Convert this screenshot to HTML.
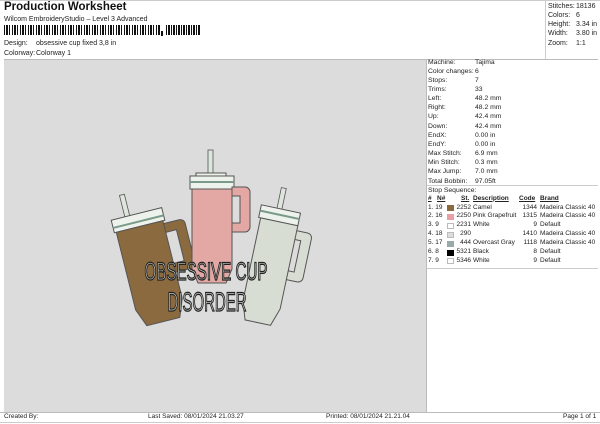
<!DOCTYPE html>
<html><head><style>
*{margin:0;padding:0;box-sizing:border-box}
body{width:600px;height:424px;background:#fff;font-family:"Liberation Sans",sans-serif;color:#222;position:relative;overflow:hidden;font-size:7px}
.a{position:absolute;white-space:nowrap}
.r{position:absolute;left:428px;font-size:6.8px;line-height:9.15px}
.t{position:absolute;font-size:6.5px;line-height:8.9px;white-space:nowrap}
</style></head><body>
<div class="a" style="left:4px;top:1px;font-size:11.5px;font-weight:bold;color:#111">Production Worksheet</div>
<div class="a" style="left:4px;top:16px;font-size:7px">Wilcom EmbroideryStudio – Level 3 Advanced</div>
<div class="a" style="left:4px;top:25px;width:157px;height:10px;background:repeating-linear-gradient(90deg,#111 0 1px,#fff 1px 2px,#111 2px 4px,#fff 4px 5px,#111 5px 6px,#fff 6px 8px)"></div>
<div class="a" style="left:161px;top:31px;width:2px;height:5px;background:#111"></div>
<div class="a" style="left:166px;top:25px;width:34px;height:10px;background:repeating-linear-gradient(90deg,#111 0 1px,#fff 1px 2px,#111 2px 4px,#fff 4px 5px)"></div>
<div class="a" style="left:4px;top:40px">Design:</div><div class="a" style="left:36px;top:40px">obsessive cup fixed 3,8 in</div>
<div class="a" style="left:4px;top:50px">Colorway:</div><div class="a" style="left:36px;top:50px">Colorway 1</div>
<div class="a" style="left:0;top:0;width:600px;height:1px;background:#ccc"></div>
<div class="a" style="left:545px;top:0;width:1px;height:60px;background:#ccc"></div>
<div class="a" style="left:548px;top:1.5px;line-height:9.25px">Stitches:<br>Colors:<br>Height:<br>Width:<br>Zoom:</div>
<div class="a" style="left:576px;top:1.5px;line-height:9.25px">18136<br>6<br>3.34 in<br>3.80 in<br>1:1</div>
<div class="a" style="left:4px;top:59px;width:594px;height:1px;background:#bbb"></div>
<div class="a" style="left:4px;top:60px;width:422px;height:352px;background:#dcdcdc"></div>
<div class="a" style="left:426px;top:60px;width:1px;height:352px;background:#bbb"></div>
<div class="r" style="top:57.5px">Machine:<br>Color changes:<br>Stops:<br>Trims:<br>Left:<br>Right:<br>Up:<br>Down:<br>EndX:<br>EndY:<br>Max Stitch:<br>Min Stitch:<br>Max Jump:<br>Total Bobbin:</div>
<div class="r" style="left:475px;top:57.5px">Tajima<br>6<br>7<br>33<br>48.2 mm<br>48.2 mm<br>42.4 mm<br>42.4 mm<br>0.00 in<br>0.00 in<br>6.9 mm<br>0.3 mm<br>7.0 mm<br>97.05ft</div>
<div class="a" style="left:427px;top:185px;width:171px;height:1px;background:#ccc"></div>
<div class="r" style="top:185.5px">Stop Sequence:</div>
<div class="t" style="left:428px;top:194.5px;font-weight:bold;text-decoration:underline">#</div>
<div class="t" style="left:437px;top:194.5px;font-weight:bold;text-decoration:underline">N#</div>
<div class="t" style="left:461px;top:194.5px;font-weight:bold;text-decoration:underline">St.</div>
<div class="t" style="left:473px;top:194.5px;font-weight:bold;text-decoration:underline">Description</div>
<div class="t" style="left:519px;top:194.5px;font-weight:bold;text-decoration:underline">Code</div>
<div class="t" style="left:540px;top:194.5px;font-weight:bold;text-decoration:underline">Brand</div>
<div class="t" style="left:428px;top:203.5px">1. 19<br>2. 16<br>3. 9<br>4. 18<br>5. 17<br>6. 8<br>7. 9</div>
<div class="a" style="left:447px;top:205px;width:7px;height:6px;background:#8a6a3e"></div>
<div class="a" style="left:447px;top:213.9px;width:7px;height:6px;background:#e8a0a6"></div>
<div class="a" style="left:447px;top:222.8px;width:7px;height:6px;background:#fff;border:1px solid #bbb"></div>
<div class="a" style="left:447px;top:231.7px;width:7px;height:6px;background:#ddd;border:1px solid #bbb"></div>
<div class="a" style="left:447px;top:240.6px;width:7px;height:6px;background:#9aa"></div>
<div class="a" style="left:447px;top:249.5px;width:7px;height:6px;background:#000"></div>
<div class="a" style="left:447px;top:258.4px;width:7px;height:6px;background:#fff;border:1px solid #bbb"></div>
<div class="t" style="left:455px;top:203.5px;width:16px;text-align:right">2252<br>2250<br>2231<br>290<br>444<br>5321<br>5346</div>
<div class="t" style="left:473px;top:203.5px">Camel<br>Pink Grapefruit<br>White<br>&nbsp;<br>Overcast Gray<br>Black<br>White</div>
<div class="t" style="left:518px;top:203.5px;width:19px;text-align:right">1344<br>1315<br>9<br>1410<br>1118<br>8<br>9</div>
<div class="t" style="left:540px;top:203.5px">Madeira Classic 40<br>Madeira Classic 40<br>Default<br>Madeira Classic 40<br>Madeira Classic 40<br>Default<br>Default</div>
<div class="a" style="left:427px;top:268px;width:171px;height:1px;background:#ccc"></div>
<svg class="a" style="left:100px;top:140px" width="220" height="200" viewBox="0 0 220 200">
<g transform="rotate(-14 50 120)">
<rect x="36" y="50" width="5" height="24" fill="#dde5dc" stroke="#555" stroke-width="0.8"/>
<rect x="22" y="72" width="52" height="13" fill="#eef2ec" stroke="#555"/>
<rect x="22" y="79" width="52" height="2" fill="#7a9a8a"/>
<path d="M72 88 h16 a5 5 0 0 1 5 5 v40 a5 5 0 0 1 -5 5 h-16 v-9 h11 v-32 h-11z" fill="#8a6a3e" stroke="#555"/>
<path d="M24 85 h48 v80 l-7 18 h-34 l-7 -18z" fill="#8a6a3e" stroke="#555"/>
</g>
<g>
<rect x="108" y="10" width="5" height="25" fill="#dde5dc" stroke="#555" stroke-width="0.8"/>
<rect x="96" y="33" width="30" height="4" fill="#eef2ec" stroke="#555"/>
<rect x="90" y="36" width="44" height="13" fill="#eef2ec" stroke="#555"/>
<rect x="90" y="41" width="44" height="2" fill="#7a9a8a"/>
<path d="M132 47 h13 a5 5 0 0 1 5 5 v35 a5 5 0 0 1 -5 5 h-13 v-9 h8 v-27 h-8z" fill="#e3a8a4" stroke="#555"/>
<path d="M92 49 h40 v80 l-6 14 h-28 l-6 -14z" fill="#e3a8a4" stroke="#555"/>
</g>
<g transform="rotate(12 170 130)">
<rect x="164" y="47" width="5" height="23" fill="#dde5dc" stroke="#555" stroke-width="0.8"/>
<rect x="148" y="68" width="40" height="13" fill="#eef2ec" stroke="#555"/>
<rect x="148" y="73" width="40" height="2" fill="#7a9a8a"/>
<path d="M186 86 h13 a5 5 0 0 1 5 5 v40 a5 5 0 0 1 -5 5 h-13 v-9 h8 v-32 h-8z" fill="#d8ddd4" stroke="#555"/>
<path d="M150 81 h38 v85 l-6 18 h-26 l-6 -18z" fill="#d8ddd4" stroke="#555"/>
</g>
<text x="106" y="140" text-anchor="middle" font-family="Liberation Sans Narrow, Liberation Sans, sans-serif" font-size="25" fill="#c8ccc6" stroke="#222" stroke-width="1.3" textLength="123" lengthAdjust="spacingAndGlyphs">OBSESSIVE CUP</text>
<text x="107" y="171" text-anchor="middle" font-family="Liberation Sans Narrow, Liberation Sans, sans-serif" font-size="27" fill="#c8ccc6" stroke="#222" stroke-width="1.3" textLength="79" lengthAdjust="spacingAndGlyphs">DISORDER</text>
</svg>
<div class="a" style="left:0;top:412px;width:600px;height:1px;background:#bbb"></div>
<div class="a" style="left:0;top:422px;width:600px;height:1px;background:#ccc"></div>
<div class="a" style="left:4px;top:413px;font-size:6.5px">Created By:</div>
<div class="a" style="left:148px;top:413px;font-size:6.5px">Last Saved: 08/01/2024 21.03.27</div>
<div class="a" style="left:326px;top:413px;font-size:6.5px">Printed: 08/01/2024 21.21.04</div>
<div class="a" style="left:563px;top:413px;font-size:6.5px">Page 1 of 1</div>
</body></html>
